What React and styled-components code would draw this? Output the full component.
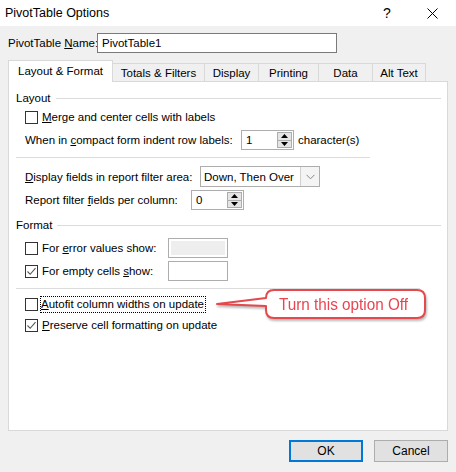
import React from "react";
import styled, { createGlobalStyle } from "styled-components";

const GlobalStyle = createGlobalStyle`
  body {
    margin: 0;
    font-family: "Liberation Sans", Arial, sans-serif;
    font-size: 11.5px;
    color: #000;
  }
`;

const Window = styled.div`
  position: relative;
  width: 456px;
  height: 472px;
  background: #f0f0f0;
  display: flex;
  flex-direction: column;
  box-sizing: border-box;
  overflow: hidden;
`;

const TitleBar = styled.div`
  height: 26px;
  flex: none;
  background: #fff;
  display: flex;
  align-items: center;
  padding-left: 5px;
  font-size: 12.5px;
`;

const Title = styled.span`
  flex: 1;
`;

const TitleButton = styled.span`
  width: ${({ w }) => w}px;
  display: flex;
  justify-content: center;
  align-items: center;
  font-size: 14px;
`;

const Body = styled.div`
  padding: 0 8px;
  display: flex;
  flex-direction: column;
`;

const NameRow = styled.div`
  margin-top: 7px;
  height: 20px;
  display: flex;
  align-items: center;
`;

const NameLabel = styled.span`
  width: 89px;
  white-space: nowrap;
`;

const TextBox = styled.div`
  box-sizing: border-box;
  width: ${({ w }) => w}px;
  height: 20px;
  border: 1px solid ${({ dark }) => (dark ? "#7a7a7a" : "#adadad")};
  background: #fff;
  display: flex;
  align-items: center;
  padding-left: 4px;
  position: relative;
`;

const Tabs = styled.div`
  margin-top: 8px;
  height: 21px;
  display: flex;
  align-items: flex-end;
  margin-bottom: -1px;
  position: relative;
  z-index: 1;
`;

const Tab = styled.div`
  box-sizing: border-box;
  width: ${({ w }) => w}px;
  height: ${({ active }) => (active ? 22 : 19)}px;
  margin-left: ${({ first }) => (first ? 0 : -1)}px;
  border: 1px solid #d9d9d9;
  border-bottom: ${({ active }) => (active ? "none" : "1px solid #d9d9d9")};
  background: ${({ active }) => (active ? "#fff" : "#f0f0f0")};
  display: flex;
  align-items: center;
  justify-content: center;
  padding-bottom: ${({ active }) => (active ? 2 : 0)}px;
  position: relative;
  z-index: ${({ active }) => (active ? 2 : 1)};
  white-space: nowrap;
`;

const Panel = styled.div`
  position: relative;
  box-sizing: border-box;
  width: 440px;
  height: 350px;
  background: #fff;
  border: 1px solid #d9d9d9;
  padding-left: 7px;
  display: flex;
  flex-direction: column;
`;

const GroupHeading = styled.div`
  margin-top: ${({ mt }) => mt}px;
  height: 16px;
  display: flex;
  align-items: center;
  gap: 5px;
  padding-right: 6px;

  &::after {
    content: "";
    flex: 1;
    height: 1px;
    background: #dcdcdc;
  }
`;

const Row = styled.div`
  margin-top: ${({ mt }) => mt}px;
  height: ${({ h }) => h || 20}px;
  padding-left: 9px;
  display: flex;
  align-items: center;
`;

const Separator = styled.div`
  margin-top: ${({ mt }) => mt}px;
  width: ${({ w }) => w}px;
  height: 1px;
  background: #dcdcdc;
`;

const Label = styled.span`
  width: ${({ w }) => (w ? `${w}px` : "auto")};
  margin-left: ${({ ml }) => ml || 0}px;
  flex: none;
  white-space: nowrap;
`;

const U = styled.span`
  text-decoration: underline;
`;

const Box = styled.span`
  box-sizing: border-box;
  width: 13px;
  height: 13px;
  flex: none;
  border: 1px solid #333;
  background: #fff;
  margin-right: 4px;
  display: flex;
  align-items: center;
  justify-content: center;
`;

const FocusText = styled.span`
  outline: 1px dotted #000;
  padding: 1px 1px 2px 0;
  margin-left: -1px;
  margin-top: 1px;
  white-space: nowrap;
`;

const Spin = styled.div`
  position: absolute;
  right: 1px;
  top: 1px;
  bottom: 1px;
  width: 15px;
  display: flex;
  flex-direction: column;
`;

const SpinButton = styled.div`
  flex: 1;
  box-sizing: border-box;
  background: #e5e5e5;
  border: 1px solid #adadad;
  margin-top: ${({ down }) => (down ? -1 : 0)}px;
  display: flex;
  align-items: center;
  justify-content: center;
`;

const Select = styled.div`
  box-sizing: border-box;
  width: 120px;
  height: 21px;
  border: 1px solid #adadad;
  background: #fff;
  display: flex;
  align-items: center;
  padding-left: 3px;
`;

const SelectText = styled.span`
  flex: 1;
  white-space: nowrap;
`;

const DropButton = styled.div`
  width: 18px;
  height: 19px;
  border-left: 1px solid #d0d0d0;
  background: #f4f4f4;
  display: flex;
  align-items: center;
  justify-content: center;
`;

const ColorBox = styled.div`
  box-sizing: border-box;
  width: 60px;
  height: 20px;
  border: 1px solid #adadad;
  background: #fff;
  padding: 2px;

  &::after {
    content: "";
    display: ${({ disabled }) => (disabled ? "block" : "none")};
    width: 100%;
    height: 100%;
    background: #eeeeee;
  }
`;

const Footer = styled.div`
  margin-top: 9px;
  display: flex;
  justify-content: flex-end;
  gap: 11px;
`;

const Button = styled.div`
  box-sizing: border-box;
  width: 74px;
  height: 22px;
  background: #e1e1e1;
  border: ${({ primary }) => (primary ? "2px solid #0078d7" : "1px solid #adadad")};
  display: flex;
  align-items: center;
  justify-content: center;
  font-size: 12px;
`;

const Callout = styled.svg`
  position: absolute;
  left: 204px;
  top: 202px;
  filter: drop-shadow(1px 2px 1px rgba(0, 0, 0, 0.28));
`;

const Check = () => (
  <svg width="11" height="11" viewBox="0 0 11 11">
    <polyline points="1.5,5.5 4.2,8.3 9.5,2.2" fill="none" stroke="#555" strokeWidth="1.1" />
  </svg>
);

const Arrow = ({ down }) => (
  <svg width="7" height="4" viewBox="0 0 7 4">
    <polygon points={down ? "0,0 7,0 3.5,4" : "0,4 7,4 3.5,0"} fill="#000" />
  </svg>
);

const SpinBox = ({ value, w }) => (
  <TextBox w={w}>
    {value}
    <Spin>
      <SpinButton>
        <Arrow />
      </SpinButton>
      <SpinButton down>
        <Arrow down />
      </SpinButton>
    </Spin>
  </TextBox>
);

const tabs = [
  { label: "Layout & Format", w: 105, active: true },
  { label: "Totals & Filters", w: 93 },
  { label: "Display", w: 55 },
  { label: "Printing", w: 61 },
  { label: "Data", w: 55 },
  { label: "Alt Text", w: 54 },
];

export default function App() {
  return (
    <>
      <GlobalStyle />
      <Window>
        <TitleBar>
          <Title>PivotTable Options</Title>
          <TitleButton w={14}>?</TitleButton>
          <TitleButton w={32} />
          <TitleButton w={12}>
            <svg width="11" height="11" viewBox="0 0 11 11">
              <path d="M0.5 0.5 L10.5 10.5 M10.5 0.5 L0.5 10.5" stroke="#000" strokeWidth="1" />
            </svg>
          </TitleButton>
          <TitleButton w={18} />
        </TitleBar>

        <Body>
          <NameRow>
            <NameLabel>
              PivotTable <U>N</U>ame:
            </NameLabel>
            <TextBox w={240} dark>
              PivotTable1
            </TextBox>
          </NameRow>

          <Tabs>
            {tabs.map((t, i) => (
              <Tab key={t.label} w={t.w} active={t.active} first={i === 0}>
                {t.label}
              </Tab>
            ))}
          </Tabs>

          <Panel>
            <GroupHeading mt={8}>Layout</GroupHeading>
            <Row mt={2} h={18}>
              <Box />
              <Label>
                <U>M</U>erge and center cells with labels
              </Label>
            </Row>
            <Row mt={4}>
              <Label w={216}>
                When in <U>c</U>ompact form indent row labels:
              </Label>
              <SpinBox value="1" w={53} />
              <Label ml={4}>character(s)</Label>
            </Row>
            <Separator mt={7} w={354} />

            <Row mt={8} h={21}>
              <Label w={175}>
                <U>D</U>isplay fields in report filter area:
              </Label>
              <Select>
                <SelectText>Down, Then Over</SelectText>
                <DropButton>
                  <svg width="9" height="6" viewBox="0 0 9 6">
                    <polyline points="0.5,0.8 4.5,4.8 8.5,0.8" fill="none" stroke="#888" strokeWidth="1" />
                  </svg>
                </DropButton>
              </Select>
            </Row>
            <Row mt={3}>
              <Label w={166}>
                Report filter <U>f</U>ields per column:
              </Label>
              <SpinBox value="0" w={53} />
            </Row>

            <GroupHeading mt={7}>Format</GroupHeading>
            <Row mt={5}>
              <Box />
              <Label w={126}>
                For <U>e</U>rror values show:
              </Label>
              <ColorBox disabled />
            </Row>
            <Row mt={3}>
              <Box>
                <Check />
              </Box>
              <Label w={126}>
                For empty cells <U>s</U>how:
              </Label>
              <ColorBox />
            </Row>
            <Separator mt={7} w={404} />

            <Row mt={6} h={18}>
              <Box />
              <FocusText>
                <U>A</U>utofit column widths on update
              </FocusText>
            </Row>
            <Row mt={3} h={18}>
              <Box>
                <Check />
              </Box>
              <Label>
                <U>P</U>reserve cell formatting on update
              </Label>
            </Row>

            <Callout width="216" height="44" viewBox="0 0 216 44">
              <path
                d="M61 6 H204 Q212 6 212 14 V26 Q212 34 204 34 H61 Q53 34 53 26 V22 L4 20 L53 14 Q53 6 61 6 Z"
                fill="#fff"
                stroke="#e5484d"
                strokeWidth="2"
                strokeLinejoin="round"
              />
              <text
                x="66"
                y="26"
                fontFamily="Liberation Sans, Arial, sans-serif"
                fontSize="16"
                fill="#ea4450"
                textLength="129"
                lengthAdjust="spacingAndGlyphs"
              >
                Turn this option Off
              </text>
            </Callout>
          </Panel>

          <Footer>
            <Button primary>OK</Button>
            <Button>Cancel</Button>
          </Footer>
        </Body>
      </Window>
    </>
  );
}
